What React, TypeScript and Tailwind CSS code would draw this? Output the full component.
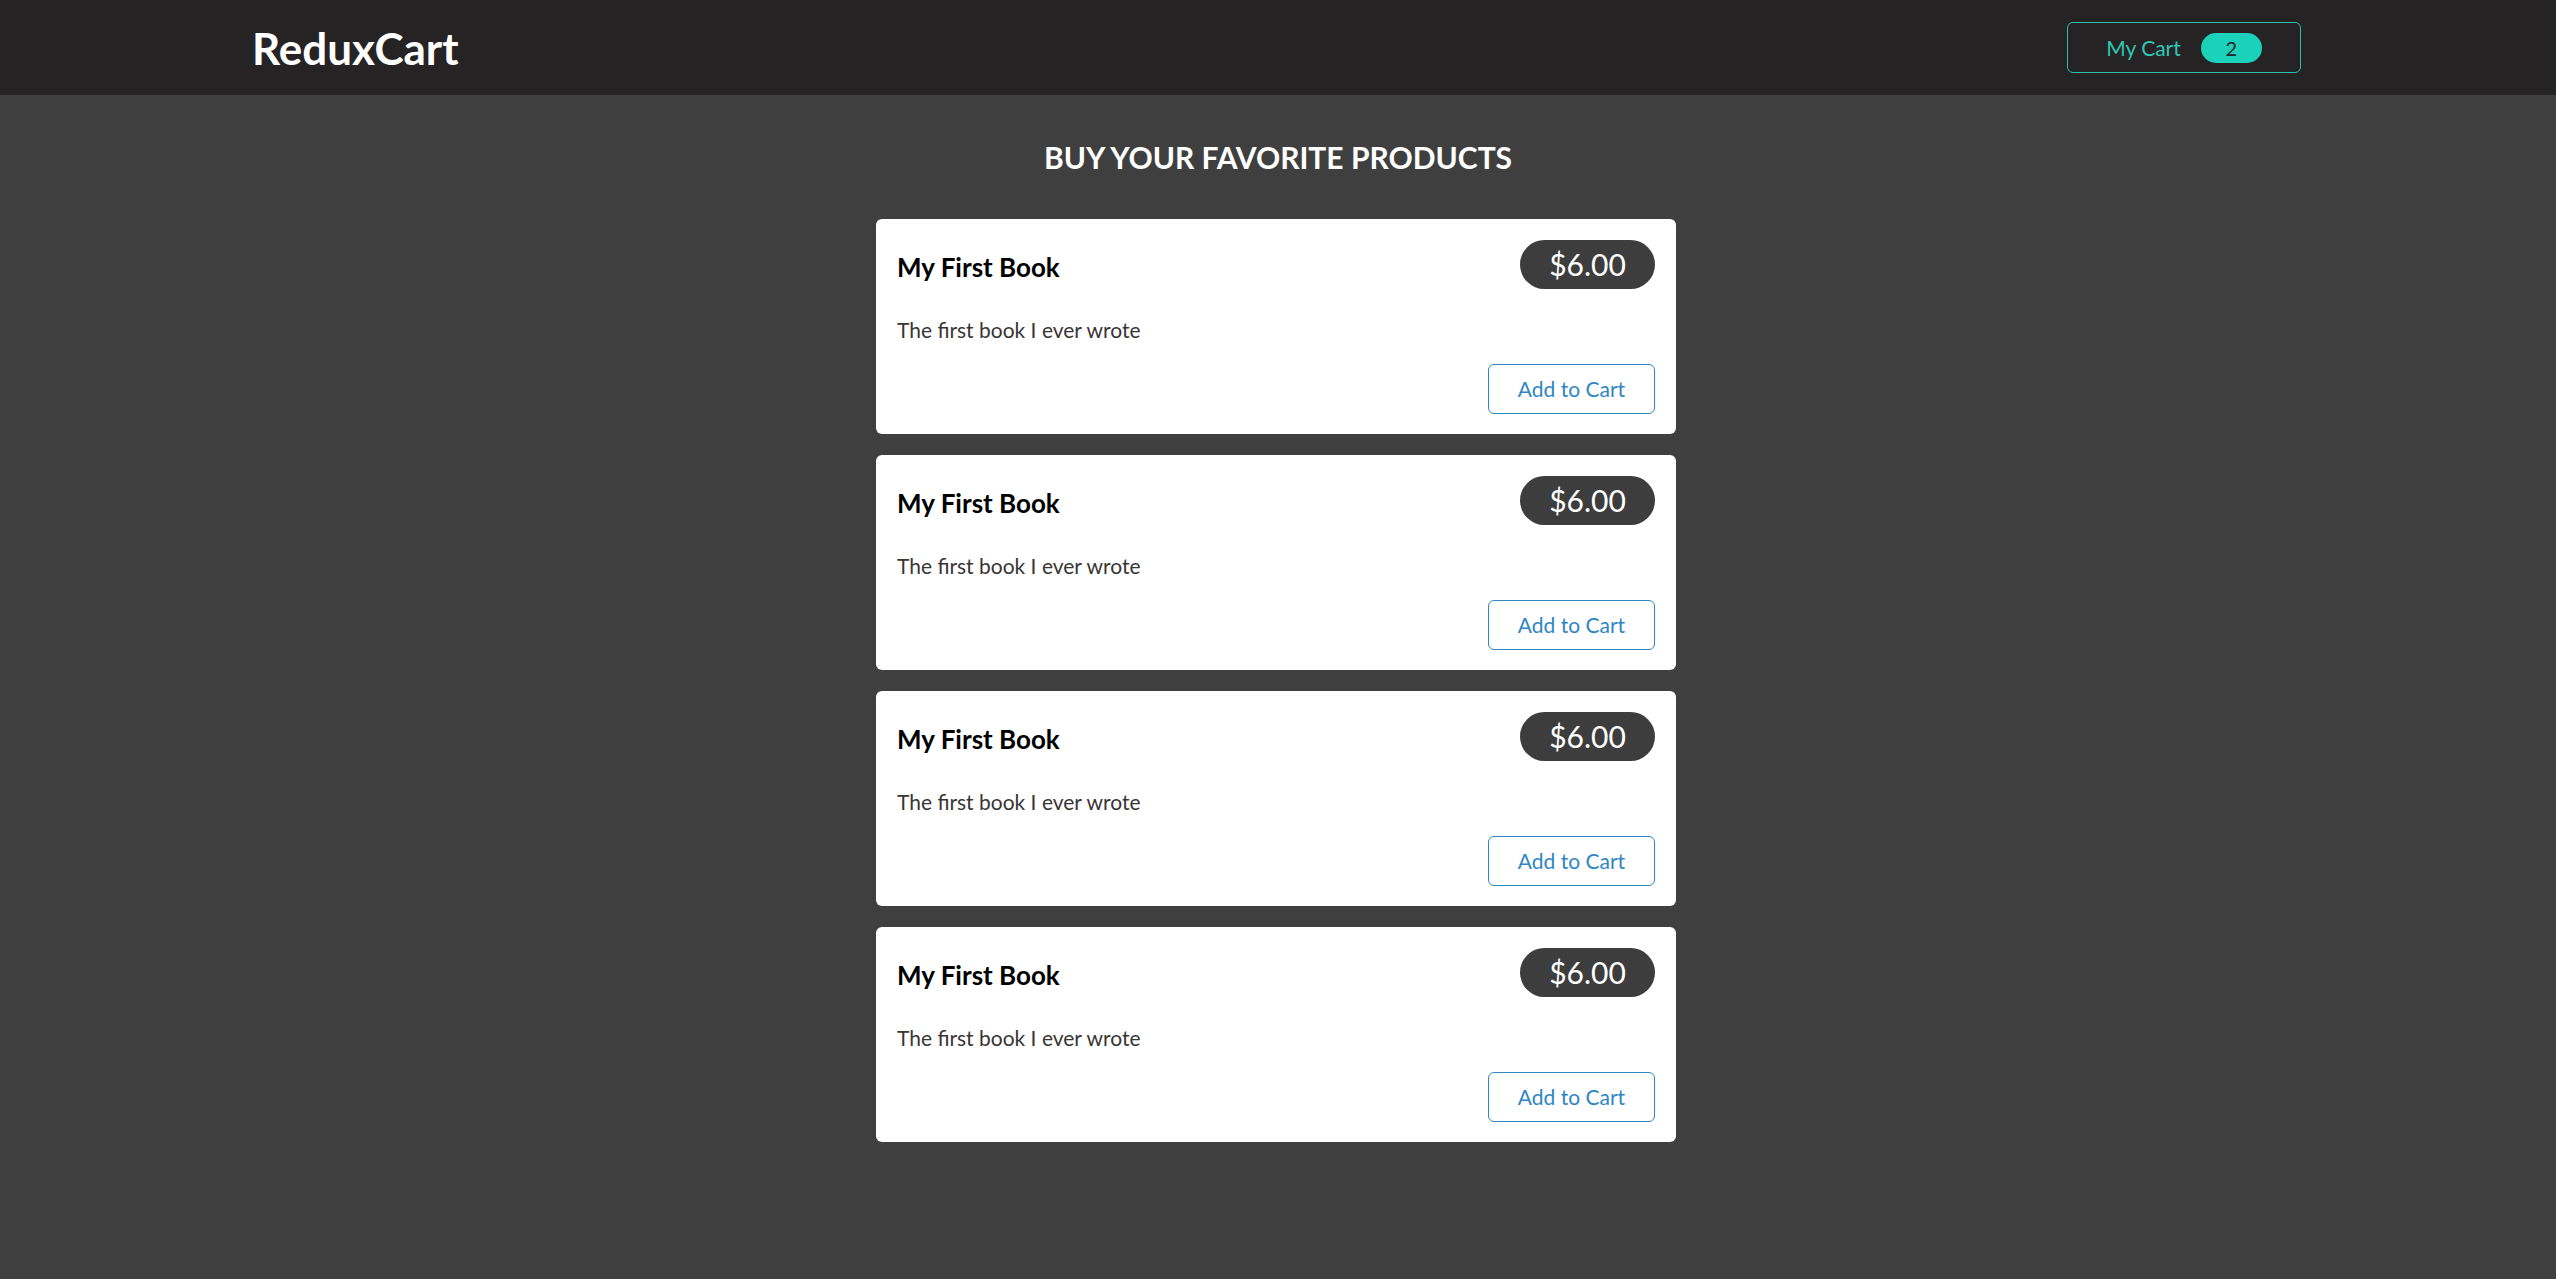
import React from 'react';

interface Product {
  id: number;
  title: string;
  price: number;
  description: string;
}

const products: Product[] = [
  { id: 1, title: 'My First Book', price: 6, description: 'The first book I ever wrote' },
  { id: 2, title: 'My First Book', price: 6, description: 'The first book I ever wrote' },
  { id: 3, title: 'My First Book', price: 6, description: 'The first book I ever wrote' },
  { id: 4, title: 'My First Book', price: 6, description: 'The first book I ever wrote' },
];

const Header: React.FC<{ count: number }> = ({ count }) => (
  <header className="h-[95px] bg-[#252324]">
    <div className="mx-auto flex h-full max-w-[2046px] items-center justify-between">
      <h1 className="-ml-[3px] text-[44px] font-bold leading-none text-white">ReduxCart</h1>
      <button className="flex h-[51px] w-[234px] items-center justify-center gap-[20px] rounded-[6px] border border-[#2bbfae] text-[21px] text-[#2ec8b4]">
        <span>My Cart</span>
        <span className="flex h-[30px] w-[61px] items-center justify-center rounded-full bg-[#1ad2ba] text-[20px] text-[#252324]">
          {count}
        </span>
      </button>
    </div>
  </header>
);

const ProductItem: React.FC<{ product: Product }> = ({ product }) => (
  <li className="flex h-[215px] flex-col rounded-[6px] bg-white px-[21px] pb-[20px] pt-[21px]">
    <div className="flex h-[49px] items-center justify-between">
      <h3 className="pt-[6px] text-[26px] font-bold text-black">{product.title}</h3>
      <div className="flex h-[49px] w-[135px] items-center justify-center rounded-full bg-[#3d3d3d] text-[30px] text-white">
        ${product.price.toFixed(2)}
      </div>
    </div>
    <p className="mt-[30px] text-[21px] leading-none text-[#3a3535]">{product.description}</p>
    <div className="mt-auto flex justify-end">
      <button className="h-[50px] w-[167px] rounded-[6px] border border-[#2f86c4] text-[21px] text-[#2f86c4]">
        Add to Cart
      </button>
    </div>
  </li>
);

export default function App() {
  return (
    <div className="min-h-[1279px] bg-[#3f3f3f] font-['Lato',sans-serif]">
      <Header count={2} />
      <main className="pr-[4px] pt-[47px]">
        <h2 className="pl-[4px] text-center text-[30px] font-bold leading-none text-white">BUY YOUR FAVORITE PRODUCTS</h2>
        <ul className="mx-auto mt-[47px] flex w-[800px] flex-col gap-[21px]">
          {products.map((p) => (
            <ProductItem key={p.id} product={p} />
          ))}
        </ul>
      </main>
    </div>
  );
}
